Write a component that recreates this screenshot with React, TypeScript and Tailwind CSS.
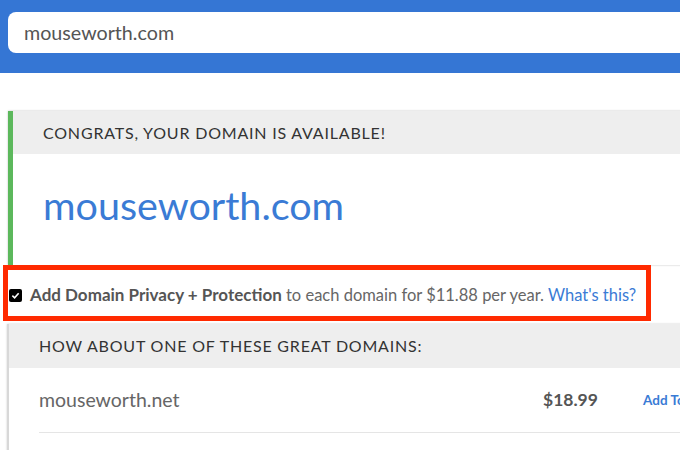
import React from "react";

export default function App() {
  return (
    <div className="w-[680px] h-[450px] overflow-hidden bg-white font-['Lato',sans-serif]">
      <div className="h-[73px] bg-[#3576d4] pt-[12px] pl-[8px]">
        <div className="h-[41px] w-[720px] bg-white rounded-l-[8px] flex items-center pl-[16px] text-[19.7px] text-[#555]">
          mouseworth.com
        </div>
      </div>

      <div className="mt-[38px] ml-[8px] w-[720px] border-l-[5px] border-[#5cb85c] shadow-[0_0_2px_rgba(0,0,0,0.25)]">
        <div className="h-[43px] bg-[#eeeeee] flex items-center pl-[30px] text-[16px] text-[#333] tracking-[0.8px]">
          CONGRATS, YOUR DOMAIN IS AVAILABLE!
        </div>
        <div className="h-[111px] flex items-center pl-[30px] pb-[10px] text-[39.5px] text-[#3a7bd5]">
          mouseworth.com
        </div>
      </div>

      <div className="ml-[3px] w-[648px] h-[56px] border-[5px] border-[#ff2a00] flex items-center pl-[1px] pt-[4px] text-[16.5px] text-[#666]">
        <span className="w-[13px] h-[13px] bg-black rounded-[2px] flex items-center justify-center shrink-0">
          <svg width="9" height="9" viewBox="0 0 10 10">
            <path d="M1.5 5.2 L4 7.5 L8.5 2.5" fill="none" stroke="white" strokeWidth="1.8" />
          </svg>
        </span>
        <span className="ml-[8px] whitespace-nowrap">
          <span className="font-bold text-[17px] text-[#555]">Add Domain Privacy + Protection</span> to each domain for $11.88 per year.{" "}
          <span className="text-[#3a7bd5]">What&apos;s this?</span>
        </span>
      </div>

      <div className="mt-[3px] ml-[7px] w-[720px] border-l-[2px] border-[#d8d8d8] shadow-[0_0_2px_rgba(0,0,0,0.2)]">
        <div className="h-[44px] bg-[#eeeeee] flex items-center pl-[30px] text-[16px] text-[#333] tracking-[0.8px]">
          HOW ABOUT ONE OF THESE GREAT DOMAINS:
        </div>
        <div className="ml-[30px] h-[65px] flex items-center border-b border-[#e5e5e5]">
          <span className="w-[504px] text-[19.5px] text-[#666]">mouseworth.net</span>
          <span className="w-[100px] text-[17.5px] font-bold text-[#555]">$18.99</span>
          <span className="text-[13.5px] font-bold text-[#3a7bd5] whitespace-nowrap">Add To Cart</span>
        </div>
        <div className="h-[40px]" />
      </div>
    </div>
  );
}
